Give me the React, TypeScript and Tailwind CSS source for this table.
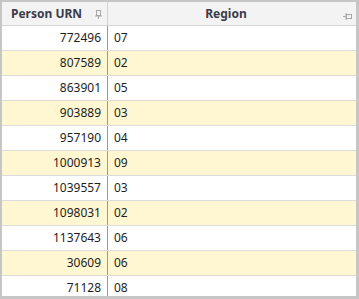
import React from "react";

const rows: [string, string][] = [
  ["772496", "07"],
  ["807589", "02"],
  ["863901", "05"],
  ["903889", "03"],
  ["957190", "04"],
  ["1000913", "09"],
  ["1039557", "03"],
  ["1098031", "02"],
  ["1137643", "06"],
  ["30609", "06"],
  ["71128", "08"],
];

function PinV() {
  return (
    <svg width="7" height="9" viewBox="0 0 7 9" className="block">
      <rect x="1.5" y="0.5" width="4" height="5" fill="none" stroke="#a8a8a8" />
      <line x1="0" y1="6" x2="7" y2="6" stroke="#a8a8a8" />
      <line x1="3.5" y1="6" x2="3.5" y2="9" stroke="#a8a8a8" />
    </svg>
  );
}

function PinH() {
  return (
    <svg width="9" height="7" viewBox="0 0 9 7" className="block">
      <rect x="3.5" y="1.5" width="5" height="4" fill="none" stroke="#a8a8a8" />
      <line x1="3" y1="0" x2="3" y2="7" stroke="#a8a8a8" />
      <line x1="0" y1="3.5" x2="3" y2="3.5" stroke="#a8a8a8" />
    </svg>
  );
}

export default function App() {
  return (
    <div
      className="w-[359px] h-[299px] overflow-hidden bg-[#c6c6c6] pl-[2px] pt-[2px] pr-[3px] pb-[3px]"
      style={{ fontFamily: '"Noto Sans", "Open Sans", sans-serif' }}
    >
      <div className="w-full h-full bg-white overflow-hidden">
        <div className="flex h-[24px] bg-[#f3f3f3] border-b border-[#d4d4d4]">
          <div className="w-[105px] relative flex items-center pl-[9px] text-[12px] font-bold text-[#3b3b4a]">
            Person URN
            <div className="absolute right-[5px] top-[8px]">
              <PinV />
            </div>
          </div>
          <div className="w-px bg-[#d4d4d4]" />
          <div className="flex-1 relative flex items-center justify-center pr-[12px] text-[12px] font-bold text-[#3b3b4a]">
            Region
            <div className="absolute right-[4px] top-[11px]">
              <PinH />
            </div>
          </div>
        </div>
        {rows.map(([a, b], i) => (
          <div
            key={i}
            className={`flex h-[25px] border-b border-[#dcdcdc] text-[12px] text-[#1e1e1e] ${
              i % 2 === 1 ? "bg-[#fef7d1]" : "bg-white"
            }`}
          >
            <div className="w-[105px] flex items-center justify-end pr-[6px]">{a}</div>
            <div className="w-px bg-[#9a9a9a]" />
            <div className="flex-1 flex items-center pl-[6px]">{b}</div>
          </div>
        ))}
      </div>
    </div>
  );
}
